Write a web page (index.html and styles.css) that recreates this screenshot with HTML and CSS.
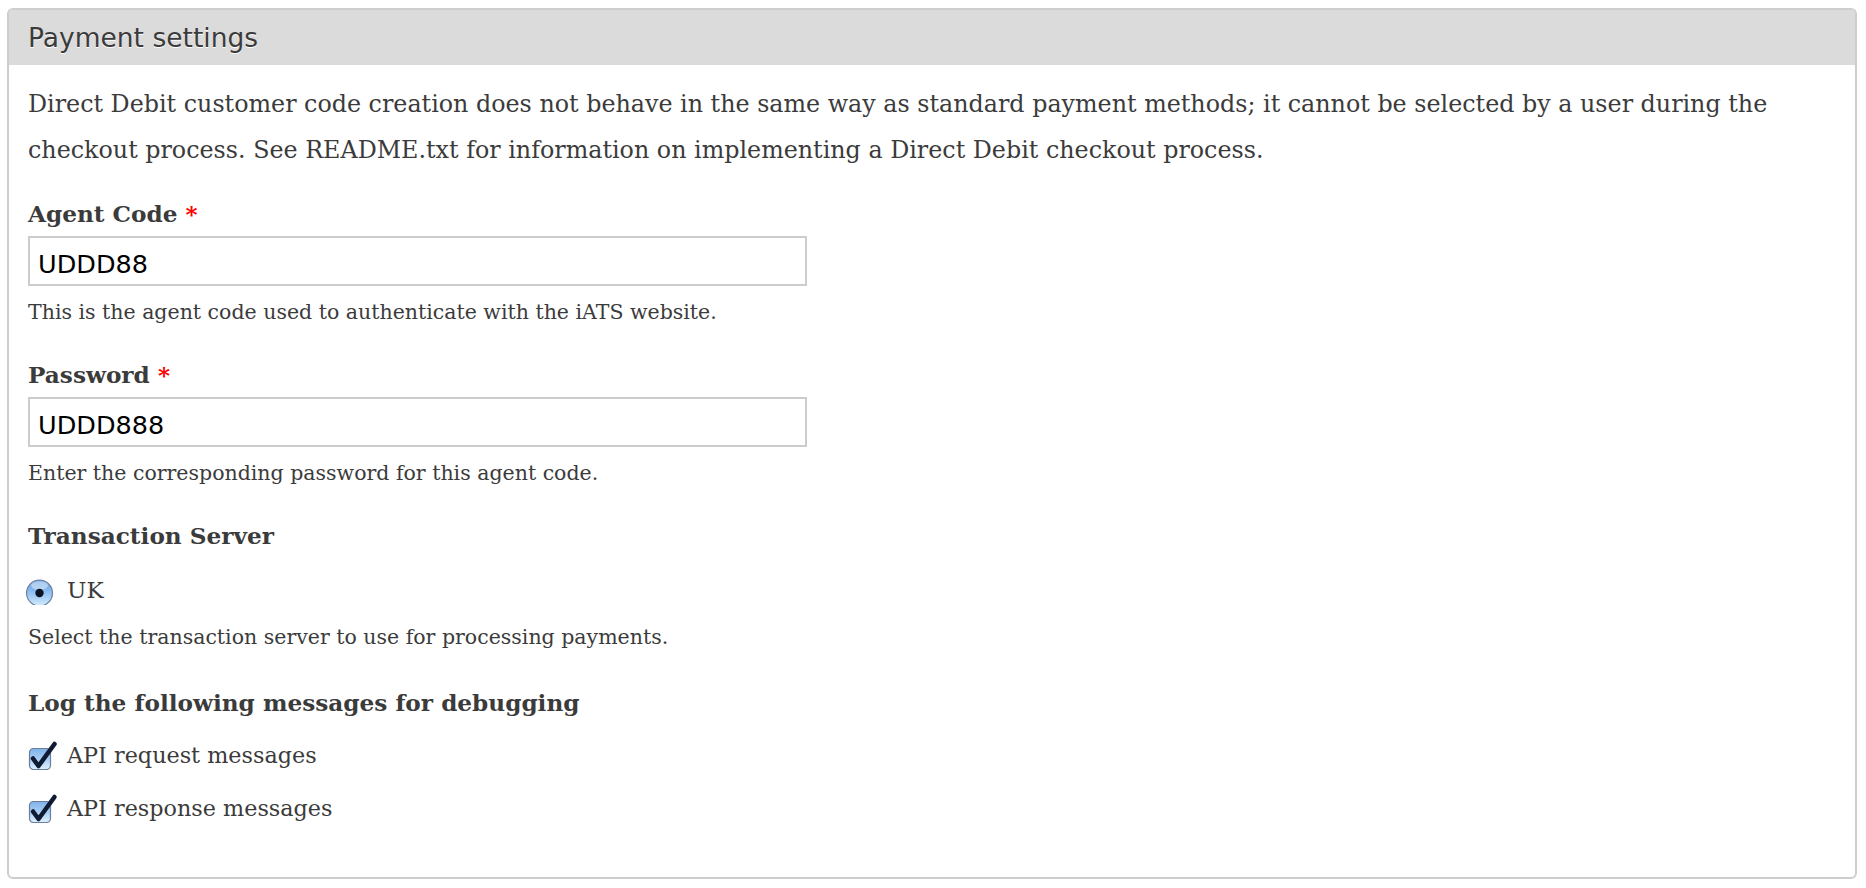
FILE: index.html
```html
<!DOCTYPE html>
<html lang="en">
<head>
<meta charset="utf-8">
<title>Payment settings</title>
<link rel="stylesheet" href="styles.css">
</head>
<body>
<div class="panel">
  <div class="panel-head">Payment settings</div>
  <div class="panel-body">
    <p class="intro">Direct Debit customer code creation does not behave in the same way as standard payment methods; it cannot be selected by a user during the checkout process. See README.txt for information on implementing a Direct Debit checkout process.</p>

    <div class="field field-first">
      <label class="field-label" for="agent">Agent Code <span class="req">*</span></label>
      <input class="text-input" id="agent" type="text" value="UDDD88">
      <div class="desc">This is the agent code used to authenticate with the iATS website.</div>
    </div>

    <div class="field field-second">
      <label class="field-label" for="pass">Password <span class="req">*</span></label>
      <input class="text-input" id="pass" type="text" value="UDDD888">
      <div class="desc">Enter the corresponding password for this agent code.</div>
    </div>

    <div class="field field-third">
      <div class="field-label">Transaction Server</div>
      <div class="choice radio-row">
        <svg class="radio-icon" width="28" height="30" viewBox="0 0 28 30" aria-hidden="true">
          <defs>
            <linearGradient id="rg" x1="0" y1="0" x2="0" y2="1">
              <stop offset="0" stop-color="#5f9be0"/>
              <stop offset="0.45" stop-color="#8cbdf0"/>
              <stop offset="1" stop-color="#d6ecff"/>
            </linearGradient>
          </defs>
          <circle cx="13.5" cy="18" r="13" fill="url(#rg)" stroke="#6f7f99" stroke-width="1.2"/>
          <ellipse cx="13.5" cy="10.5" rx="8.5" ry="4.2" fill="#ffffff" opacity="0.45"/>
          <circle cx="13.5" cy="18" r="4.2" fill="#0b1224"/>
        </svg>
        <span class="choice-text">UK</span>
      </div>
      <div class="desc desc-radio">Select the transaction server to use for processing payments.</div>
    </div>

    <div class="field field-fourth">
      <div class="field-label">Log the following messages for debugging</div>
      <div class="choice check-row check-first">
        <svg class="check-icon" width="30" height="30" viewBox="0 0 30 30" aria-hidden="true">
          <defs>
            <linearGradient id="cg1" x1="0" y1="0" x2="0" y2="1">
              <stop offset="0" stop-color="#7fb2ea"/>
              <stop offset="0.5" stop-color="#a6cdf4"/>
              <stop offset="1" stop-color="#dff0ff"/>
            </linearGradient>
          </defs>
          <rect x="1.5" y="8.5" width="21" height="21" rx="4" fill="url(#cg1)" stroke="#6c7d99" stroke-width="1.2"/>
          <path d="M5 18.5 L10.5 26 L26.5 4" fill="none" stroke="#0f1a33" stroke-width="4.5" stroke-linecap="round" stroke-linejoin="round"/>
        </svg>
        <span class="choice-text">API request messages</span>
      </div>
      <div class="choice check-row check-second">
        <svg class="check-icon" width="30" height="30" viewBox="0 0 30 30" aria-hidden="true">
          <defs>
            <linearGradient id="cg2" x1="0" y1="0" x2="0" y2="1">
              <stop offset="0" stop-color="#7fb2ea"/>
              <stop offset="0.5" stop-color="#a6cdf4"/>
              <stop offset="1" stop-color="#dff0ff"/>
            </linearGradient>
          </defs>
          <rect x="1.5" y="8.5" width="21" height="21" rx="4" fill="url(#cg2)" stroke="#6c7d99" stroke-width="1.2"/>
          <path d="M5 18.5 L10.5 26 L26.5 4" fill="none" stroke="#0f1a33" stroke-width="4.5" stroke-linecap="round" stroke-linejoin="round"/>
        </svg>
        <span class="choice-text">API response messages</span>
      </div>
    </div>
  </div>
</div>
</body>
</html>
```

FILE: styles.css
```css
html, body {
  margin: 0;
  padding: 0;
  background: #ffffff;
}

body {
  font-family: "DejaVu Serif", Georgia, serif;
  color: #3b3b3b;
}

.panel {
  margin: 8px 9px 10px 7px;
  border: 2px solid #cdcdcd;
  border-radius: 6px;
  overflow: hidden;
}

.panel-head {
  background: #dbdbdb;
  font-family: "DejaVu Sans", "Lucida Grande", sans-serif;
  font-size: 26.5px;
  line-height: 30px;
  padding: 13px 19px 12px;
  color: #3b3b3b;
  text-shadow: 0 1px 0 #ffffff;
}

.panel-body {
  padding: 16px 19px 54px;
}

.intro {
  margin: 0;
  max-width: 1790px;
  font-size: 23.8px;
  line-height: 46px;
}

.field-first { margin-top: 26px; }
.field-second { margin-top: 33px; }
.field-third { margin-top: 33px; }
.field-fourth { margin-top: 36px; }

.field-label {
  display: block;
  font-weight: bold;
  font-size: 23.2px;
  line-height: 30px;
}

.req {
  color: #ff0000;
}

.text-input {
  display: block;
  box-sizing: border-box;
  width: 779px;
  height: 50px;
  margin: 7px 0 0;
  padding: 6px 8px 0;
  border: 2px solid #cccccc;
  border-radius: 0;
  background: #ffffff;
  font-family: "DejaVu Sans", "Lucida Grande", sans-serif;
  font-size: 25.5px;
  color: #000000;
  outline: none;
}

.desc {
  margin-top: 11px;
  font-size: 20.5px;
  line-height: 30px;
}

.desc-radio {
  margin-top: 17px;
}

.choice {
  display: flex;
  align-items: flex-start;
  font-size: 23px;
  line-height: 30px;
}

.check-row {
  font-size: 22.3px;
}

.radio-row {
  margin-top: 24px;
}

.radio-icon {
  display: block;
  margin-left: -2px;
  margin-right: 13px;
  flex: none;
}

.check-first { margin-top: 22px; }
.check-second { margin-top: 23px; }

.check-icon {
  display: block;
  margin-right: 9px;
  flex: none;
}
```
